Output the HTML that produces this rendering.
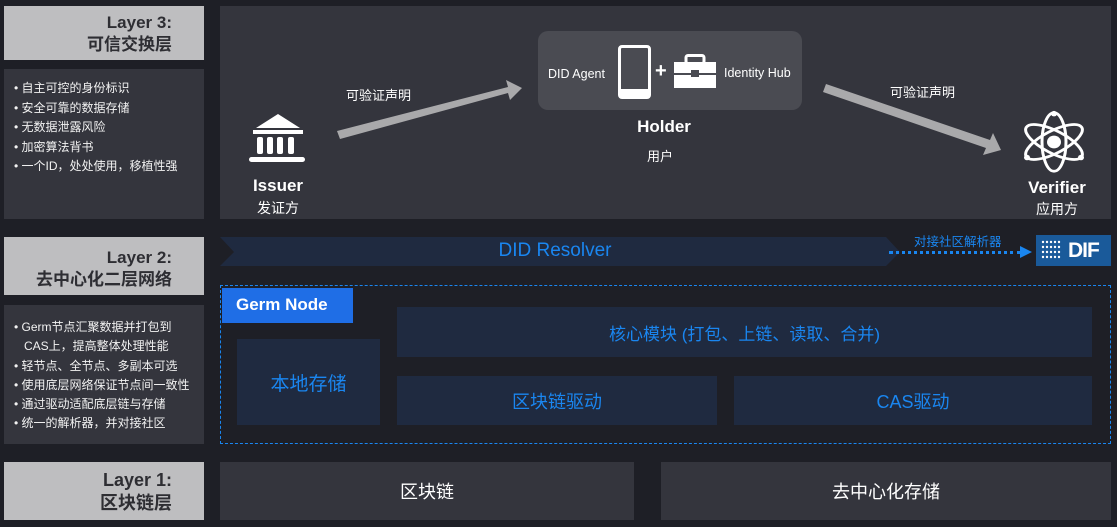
<!DOCTYPE html>
<html><head><meta charset="utf-8"><style>
*{margin:0;padding:0;box-sizing:border-box}
body{width:1117px;height:527px;background:#1e1f26;position:relative;overflow:hidden;font-family:"Liberation Sans","Noto Sans CJK SC",sans-serif;color:#fff}
.a{position:absolute}
.lab{background:#bebec0;color:#2e2e33;font-weight:bold;text-align:right;padding-right:32px;font-size:17px;line-height:22px}
.panel{background:#34353d}
.blt{font-size:12px;line-height:19.5px;color:#f2f2f2;padding-left:10px}
.blt div{padding-left:10px;text-indent:-10px}
.db{background:#1f2a40;color:#1a86f0;display:flex;align-items:center;justify-content:center;font-size:18px}
.c{text-align:center}
</style></head><body>
<div class="a lab" style="left:4px;top:6px;width:200px;height:54px;padding-top:6px">Layer 3:<br>可信交换层</div>
<div class="a panel blt" style="left:4px;top:69px;width:200px;height:150px;padding-top:10px">
<div>• 自主可控的身份标识</div><div>• 安全可靠的数据存储</div><div>• 无数据泄露风险</div><div>• 加密算法背书</div><div>• 一个ID，处处使用，移植性强</div></div>
<div class="a panel" style="left:220px;top:6px;width:891px;height:213px"></div>
<div class="a" style="left:538px;top:31px;width:264px;height:79px;background:#4a4b52;border-radius:10px"></div>
<div class="a" style="left:548px;top:67px;font-size:12.5px">DID Agent</div>
<div class="a" style="left:618px;top:45px;width:33px;height:54px;border:3px solid #fff;border-radius:4px;border-bottom-width:10px"></div>
<div class="a" style="left:655px;top:60px;font-size:20px;font-weight:bold">+</div>
<svg class="a" style="left:673px;top:54px" width="44" height="34"><rect x="13" y="1.5" width="18" height="8" rx="2" fill="none" stroke="#fff" stroke-width="3"/><rect x="1" y="8" width="42" height="11" fill="#fff"/><rect x="1" y="21" width="42" height="13" fill="#fff"/><rect x="18" y="16" width="8" height="7" fill="#4a4b52"/></svg>
<div class="a" style="left:724px;top:66px;font-size:12.5px">Identity Hub</div>
<div class="a c" style="left:614px;top:117px;width:100px;font-size:17px;font-weight:bold">Holder</div>
<div class="a c" style="left:630px;top:146px;width:60px;font-size:13px">用户</div>
<svg class="a" style="left:248px;top:114px" width="60" height="52"><polygon points="30,0 52,14 8,14" fill="#fff"/><rect x="5" y="16" width="50" height="4" fill="#fff"/><rect x="9" y="23" width="6" height="17" rx="2" fill="#fff"/><rect x="19" y="23" width="6" height="17" rx="2" fill="#fff"/><rect x="29" y="23" width="6" height="17" rx="2" fill="#fff"/><rect x="40" y="23" width="6" height="17" rx="2" fill="#fff"/><rect x="1" y="43" width="56" height="5" rx="2.5" fill="#fff"/></svg>
<div class="a c" style="left:238px;top:176px;width:80px;font-size:17px;font-weight:bold">Issuer</div>
<div class="a c" style="left:238px;top:198px;width:80px;font-size:14px">发证方</div>
<div class="a" style="left:346px;top:85px;font-size:13px">可验证声明</div>
<div class="a" style="left:890px;top:82px;font-size:13px">可验证声明</div>
<svg class="a" style="left:0;top:0" width="1117" height="230"><g fill="#a9a9ab"><polygon points="337,131 508,87 506,80 522,88 510,100 508,93 340,139"/><polygon points="826,84 990,140 993,133 1001,150 983,155 986,148 823,92"/></g></svg>
<svg class="a" style="left:1022px;top:110px" width="64" height="64" viewBox="0 0 64 70" preserveAspectRatio="none"><g fill="none" stroke="#fff" stroke-width="3"><ellipse cx="32" cy="35" rx="12" ry="32"/><ellipse cx="32" cy="35" rx="12" ry="32" transform="rotate(60 32 35)"/><ellipse cx="32" cy="35" rx="12" ry="32" transform="rotate(-60 32 35)"/></g><circle cx="32" cy="35" r="7" fill="#fff"/><circle cx="32" cy="4" r="3" fill="#fff"/><circle cx="5" cy="52" r="3" fill="#fff"/><circle cx="59" cy="52" r="3" fill="#fff"/></svg>
<div class="a c" style="left:1016px;top:178px;width:82px;font-size:17px;font-weight:bold">Verifier</div>
<div class="a c" style="left:1016px;top:199px;width:82px;font-size:14px">应用方</div>
<div class="a lab" style="left:4px;top:237px;width:200px;height:58px;padding-top:10px">Layer 2:<br>去中心化二层网络</div>
<div class="a panel blt" style="left:4px;top:305px;width:200px;height:139px;padding-top:13px;line-height:19.3px">
<div>• Germ节点汇聚数据并打包到<br>CAS上，提高整体处理性能</div><div>• 轻节点、全节点、多副本可选</div><div>• 使用底层网络保证节点间一致性</div><div>• 通过驱动适配底层链与存储</div><div>• 统一的解析器，并对接社区</div></div>
<svg class="a" style="left:220px;top:237px" width="680" height="30"><polygon points="0,0 666,0 680,15 666,29 0,29 14,15" fill="#1f2a40"/></svg>
<div class="a c" style="left:222px;top:240px;width:666px;font-size:19px;color:#1a86f0">DID Resolver</div>
<div class="a" style="left:914px;top:231px;font-size:12.5px;color:#1a86f0">对接社区解析器</div>
<div class="a" style="left:889px;top:251px;width:132px;border-top:3px dotted #1a86f0"></div>
<svg class="a" style="left:1020px;top:245px" width="14" height="14"><polygon points="0,1 12,7 0,13" fill="#1a86f0"/></svg>
<div class="a" style="left:1036px;top:235px;width:75px;height:31px;background:#1a5a9a"></div>
<svg class="a" style="left:1040px;top:239px" width="26" height="24"><g fill="#fff">
<circle cx="3" cy="3" r="1.2"/><circle cx="7" cy="3" r="1.2"/><circle cx="11" cy="3" r="1.2"/><circle cx="15" cy="3" r="1.2"/><circle cx="19" cy="3" r="1.2"/>
<circle cx="3" cy="8" r="1.2"/><circle cx="7" cy="8" r="1.2"/><circle cx="11" cy="8" r="1.2"/><circle cx="15" cy="8" r="1.2"/><circle cx="19" cy="8" r="1.2"/>
<circle cx="3" cy="13" r="1.2"/><circle cx="7" cy="13" r="1.2"/><circle cx="11" cy="13" r="1.2"/><circle cx="15" cy="13" r="1.2"/><circle cx="19" cy="13" r="1.2"/>
<circle cx="3" cy="18" r="1.2"/><circle cx="7" cy="18" r="1.2"/><circle cx="11" cy="18" r="1.2"/><circle cx="15" cy="18" r="1.2"/><circle cx="19" cy="18" r="1.2"/></g></svg>
<div class="a" style="left:1068px;top:239px;font-size:21px;font-weight:bold;letter-spacing:-1px">DIF</div>
<div class="a" style="left:220px;top:285px;width:891px;height:159px;border:1px dashed #1a86f0"></div>
<div class="a" style="left:222px;top:288px;width:131px;height:35px;background:#1f6ee6;font-size:17px;font-weight:bold;padding:7px 0 0 14px">Germ Node</div>
<div class="a db" style="left:237px;top:339px;width:143px;height:86px;font-size:19px">本地存储</div>
<div class="a db" style="left:397px;top:307px;width:695px;height:50px;font-size:17px">核心模块 (打包、上链、读取、合并)</div>
<div class="a db" style="left:397px;top:376px;width:320px;height:49px">区块链驱动</div>
<div class="a db" style="left:734px;top:376px;width:358px;height:49px">CAS驱动</div>
<div class="a lab" style="left:4px;top:462px;width:200px;height:58px;padding-top:7px;font-size:18px;line-height:23px">Layer 1:<br>区块链层</div>
<div class="a panel" style="left:220px;top:462px;width:414px;height:58px;display:flex;align-items:center;justify-content:center;font-size:18px">区块链</div>
<div class="a panel" style="left:661px;top:462px;width:450px;height:58px;display:flex;align-items:center;justify-content:center;font-size:18px">去中心化存储</div>
</body></html>
